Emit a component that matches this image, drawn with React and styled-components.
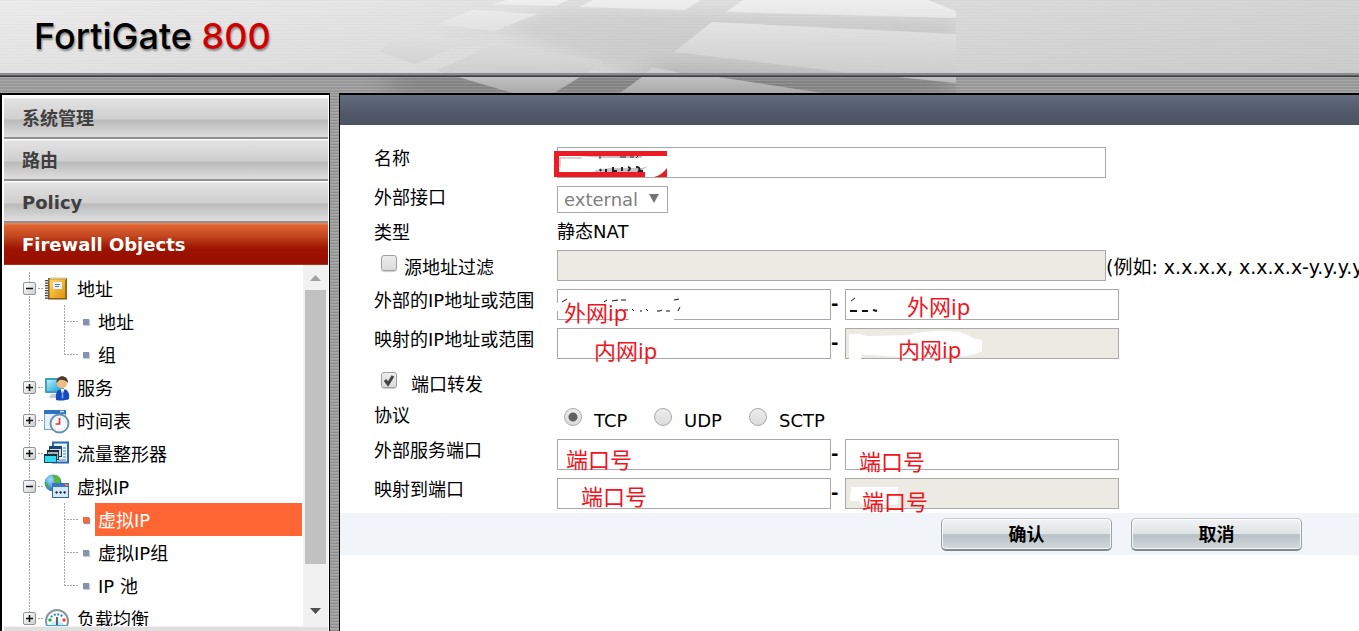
import React from "react";
import styled, { createGlobalStyle, css } from "styled-components";

const Global = createGlobalStyle`
  * { box-sizing: border-box; }
  html, body { margin: 0; height: 100%; }
  body {
    font-family: "DejaVu Sans", "Noto Sans CJK SC", sans-serif;
    font-size: 18px;
    line-height: 22px;
    color: #000;
    background: #fff;
  }
  button, input, select { font: inherit; }
`;

const Page = styled.div`
  display: flex;
  flex-direction: column;
  height: 100vh;
  overflow: hidden;
  background: repeating-linear-gradient(180deg, #8e8e8e 0 1px, #a8a8a8 1px 2px, #a0a0a0 2px 3px);
`;

/* ---------- banner ---------- */

const Banner = styled.header`
  position: relative;
  flex: none;
  overflow: hidden;
`;

const BannerTop = styled.div`
  height: 73px;
  padding: 0 0 2px 34px;
  display: flex;
  align-items: center;
  background:
    repeating-linear-gradient(180deg, rgba(0, 0, 0, 0.02) 0 1px, transparent 1px 3px),
    linear-gradient(172deg, #ececec 0%, #e2e2e2 30%, #cccccc 100%);
`;

const BannerRule = styled.div`
  height: 4px;
  background: linear-gradient(180deg, #8c8c90 0 50%, #5c5c60 50% 75%, #3e3e3e 75%);
`;

const BannerStrip = styled.div`
  height: 16px;
  background: repeating-linear-gradient(180deg, #a8a8a8 0 1px, #979797 1px 3px);
`;

const FloorArt = styled.svg`
  position: absolute;
  left: 340px;
  top: 0;
`;

const Product = styled.h1`
  position: relative;
  z-index: 1;
  margin: 0;
  font-family: Inter, "Liberation Sans", sans-serif;
  font-size: 36px;
  line-height: 44px;
  font-weight: 500;
  color: #000;
  text-shadow: 1px 2px 2px rgba(0, 0, 0, 0.4);
`;

const Model = styled.span`
  color: #d10000;
`;

/* ---------- frame ---------- */

const Body = styled.div`
  flex: 1;
  min-height: 0;
  display: flex;
  gap: 9px;
`;

const Sidebar = styled.nav`
  flex: none;
  width: 330px;
  display: flex;
  flex-direction: column;
  padding: 2px 1px 0 2px;
  background: #fff;
  border: solid #000;
  border-width: 2px 1px 0 2px;
`;

const MenuHead = styled.button`
  flex: none;
  height: 42px;
  padding: 2px 0 0 18px;
  border: 0;
  text-align: left;
  font-weight: 700;
  color: #3f3f3f;
  background: linear-gradient(
    180deg,
    #fafafa 0 1px, #e2e2e2 2px, #cfcfcf 22px, #bababa 23px, #dedede 40px, #8f8f8f 40px 42px
  );
  ${(p) =>
    p.$active &&
    css`
      color: #fff;
      background: linear-gradient(
        180deg,
        #f08050 0 1px, #df6230 2px, #c64a22 12px, #9c1200 26px, #980f00 41px, #b03020 41px 42px
      );
    `}
`;

const NextHead = styled.div`
  flex: none;
  height: 5px;
  background: linear-gradient(180deg, #f2f2f2 0 1px, #dfdfdf 1px);
`;

const TreeArea = styled.div`
  flex: 1;
  min-height: 0;
  display: flex;
`;

const Tree = styled.ul`
  flex: 1;
  margin: 0;
  padding: 7px 0 0;
  list-style: none;
  overflow: hidden;
`;

const SubTree = styled.ul`
  margin: 0;
  padding: 0;
  list-style: none;
`;

const dotsV = "repeating-linear-gradient(180deg, #a8a8a8 0 2px, #fff 2px 3px)";
const dotsH = "repeating-linear-gradient(90deg, #a8a8a8 0 2px, #fff 2px 3px)";

const Branch = styled.li`
  position: relative;
  &::before {
    content: "";
    position: absolute;
    left: 25px;
    top: 0;
    bottom: 0;
    width: 1px;
    background: ${dotsV};
  }
`;

const BranchRow = styled.div`
  position: relative;
  height: 33px;
  display: flex;
  align-items: center;
  padding-left: 19px;
`;

const Toggle = styled.button`
  width: 13px;
  height: 13px;
  padding: 0;
  border: 1px solid #8d969c;
  border-radius: 2px;
  background: linear-gradient(135deg, #fff, #cfcfcf);
  display: block;
  svg { display: block; }
`;

const Dash = styled.span`
  width: 5px;
  height: 1px;
  margin: 0 1px 0 2px;
  background: ${dotsH};
`;

const Icon = styled.svg`
  display: block;
  flex: none;
  width: 26px;
  height: 26px;
  margin-right: 7px;
`;

const BranchLink = styled.a`
  padding-top: 2px;
  color: #000;
  text-decoration: none;
`;

const Leaf = styled.li`
  position: relative;
  height: 33px;
  padding-left: 60px;
  display: flex;
  align-items: center;
  &::before {
    content: "";
    position: absolute;
    left: 60px;
    top: 0;
    height: ${(p) => (p.$last ? "17px" : "33px")};
    width: 1px;
    background: ${dotsV};
  }
`;

const LeafDash = styled.span`
  width: 14px;
  height: 1px;
  background: ${dotsH};
`;

const Bullet = styled.span`
  width: 6px;
  height: 6px;
  margin: 0 6px 0 5px;
  background: ${(p) => (p.$active ? "#ff6633" : "#8793ae")};
  box-shadow: 1px 1px 1px ${(p) => (p.$active ? "#8793ae" : "#c8cede")};
`;

const LeafLink = styled.a`
  flex: 1;
  margin-right: 1px;
  padding: 2px 3px 0;
  line-height: 31px;
  text-decoration: none;
  color: ${(p) => (p.$active ? "#fff" : "#000")};
  background: ${(p) => (p.$active ? "#ff6633" : "transparent")};
`;

const ScrollTrack = styled.div`
  flex: none;
  width: 25px;
  display: flex;
  flex-direction: column;
  align-items: center;
  padding-bottom: 3px;
  background: #f1f1f1;
`;

const ScrollButton = styled.button`
  flex: none;
  width: 25px;
  height: 25px;
  padding: 0;
  border: 0;
  background: none;
  display: flex;
  align-items: center;
  justify-content: center;
`;

const ScrollThumb = styled.div`
  width: 21px;
  height: 89%;
  background: #c1c1c1;
`;

const ScrollLane = styled.div`
  flex: 1;
  min-height: 0;
`;

const Main = styled.main`
  flex: 1;
  min-width: 0;
  overflow: hidden;
  background: #fff;
  border: solid #000;
  border-width: 2px 0 0 1px;
`;

const TitleBar = styled.div`
  height: 30px;
  background: linear-gradient(180deg, #626c80, #505867 60%, #4c5262);
`;

/* ---------- form ---------- */

const Form = styled.form`
  padding-top: 18px;
`;

const Row = styled.div`
  display: grid;
  grid-template-columns: 183px 1fr;
  padding-left: 34px;
  min-height: ${(p) => p.$h || 39}px;
  white-space: nowrap;
`;

const Label = styled.label`
  padding-top: 5px;
`;

const Cell = styled.div`
  display: flex;
  align-items: flex-start;
  padding-top: 4px;
`;

const CheckCell = styled.div`
  display: flex;
  align-items: flex-start;
  padding: 9px 0 0 7px;
`;

const CheckLabel = styled.label`
  display: flex;
  gap: ${(p) => p.$gap}px;
`;

const CheckText = styled.span`
  padding-top: 2px;
`;

const CheckBox = styled.span`
  position: relative;
  width: 16px;
  height: 16px;
  svg {
    position: absolute;
    left: 0;
    top: 0;
    pointer-events: none;
  }
`;

const Check = styled.input`
  appearance: none;
  display: block;
  width: 16px;
  height: 16px;
  margin: 0;
  border: 1px solid #a0a0a0;
  border-radius: 3px;
  background: linear-gradient(180deg, #ececec, #dcdcdc);
  box-shadow: 0 1px 1px #ccc;
`;

const Radios = styled.div`
  display: flex;
  padding: 8px 0 0 7px;
`;

const RadioLabel = styled.label`
  display: flex;
  gap: 12px;
  width: ${(p) => p.$w}px;
`;

const Radio = styled.input`
  appearance: none;
  width: 18px;
  height: 18px;
  margin: 0;
  border: 1px solid #a8a8a8;
  border-radius: 50%;
  background: linear-gradient(180deg, #ececec, #dcdcdc);
  &:checked {
    background: radial-gradient(circle, #606060 0 4px, transparent 5px),
      linear-gradient(180deg, #ececec, #dcdcdc);
  }
`;

const Field = styled.div`
  position: relative;
`;

const Text = styled.input`
  display: block;
  width: ${(p) => (p.$wide ? 549 : 274)}px;
  height: 31px;
  padding: 0 6px;
  border: 1px solid #a9a9a9;
  border-radius: 0;
  background: ${(p) => (p.disabled ? "#ebebe4" : "#fff")};
`;

const Between = styled.span`
  width: 14px;
  padding-top: 4px;
  font-weight: 700;
`;

const Hint = styled.span`
  padding-top: 6px;
  font-size: 19px;
`;

const SelectWrap = styled.div`
  position: relative;
  svg {
    position: absolute;
    right: 9px;
    top: 8px;
  }
`;

const Select = styled.select`
  appearance: none;
  display: block;
  width: 111px;
  height: 27px;
  padding: 1px 6px 0;
  border: 1px solid #a9a9a9;
  border-radius: 0;
  background: #fff;
  color: #808080;
  opacity: 1;
`;

const Note = styled.span`
  position: absolute;
  left: ${(p) => p.$x}px;
  top: ${(p) => p.$y}px;
  font-family: "Noto Sans", "Noto Sans CJK SC", sans-serif;
  font-size: 22px;
  line-height: 26px;
  color: #f0141e;
  white-space: nowrap;
  pointer-events: none;
`;

const Scribble = styled.svg`
  position: absolute;
  left: -3px;
  top: 0;
  overflow: visible;
  pointer-events: none;
`;

const Actions = styled.div`
  height: 42px;
  display: flex;
  justify-content: flex-end;
  align-items: center;
  gap: 19px;
  padding-right: 57px;
  background: #f1f5fa;
`;

const Action = styled.button`
  width: 171px;
  height: 33px;
  padding: 2px 0 0;
  font-weight: 700;
  color: #000;
  border: 1px solid #9aa3a5;
  border-top-color: #c4c8ca;
  border-bottom: 2px solid #7f898b;
  border-radius: 5px;
  background: linear-gradient(180deg, #f1f3f4 0, #dfe2e4 50%, #b7c0c4 52%, #d3dadc 100%);
  box-shadow: inset 0 0 0 1px rgba(255, 255, 255, 0.8);
`;

/* ---------- icons ---------- */

const BookIcon = () => (
  <Icon viewBox="0 0 26 26" aria-hidden="true">
    <defs>
      <linearGradient id="book" x1="0" y1="0" x2="1" y2="1">
        <stop offset="0" stopColor="#ffdc62" />
        <stop offset="1" stopColor="#e2920c" />
      </linearGradient>
    </defs>
    <path d="M4 2h19v21H4z" fill="#9a6a1c" />
    <path d="M6 1.500h16v2H6z" fill="#d8c48c" />
    <path d="M5 3.500h16v18.500H5z" fill="url(#book)" />
    <path d="M2.500 4v19" stroke="#4a4238" strokeWidth="3" strokeDasharray="1.300 1.200" />
    <path d="M5 3v20" stroke="#6b5430" />
    <rect x="9" y="6" width="9" height="7" fill="#eef4ff" />
    <path d="M11 8.500h5M11 10.500h4" stroke="#4a79c0" />
    <path d="M4 23h19" stroke="#77501a" />
  </Icon>
);

const ServiceIcon = () => (
  <Icon viewBox="0 0 26 26" aria-hidden="true">
    <defs>
      <linearGradient id="screen" x1="0" y1="0" x2="1" y2="1">
        <stop offset="0" stopColor="#b8f0fb" />
        <stop offset="1" stopColor="#159fd0" />
      </linearGradient>
    </defs>
    <rect x="1" y="3" width="19" height="15" rx="1" fill="#3c9fc0" />
    <rect x="3" y="5" width="15" height="11" fill="url(#screen)" />
    <path d="M7 19h7l2 4H5z" fill="#c3ced4" />
    <path d="M12 25c-1-8 2-11 6.500-11S26 17 25 24c-3 1.500-9 2-13 1z" fill="#1748bd" />
    <path d="M16.500 14l2 6 2-6z" fill="#fff" />
    <path d="M18.500 15l1 7-1 2-1-2z" fill="#68b4f4" />
    <circle cx="18" cy="8.500" r="5" fill="#eebc80" />
    <path d="M12.500 8c-.5-9 12-9 11.500 0-2-3-6-3.500-8.500-3-1 1-2 2-3 3z" fill="#493b2b" />
  </Icon>
);

const ClockIcon = () => (
  <Icon viewBox="0 0 26 26" aria-hidden="true">
    <rect x="0.500" y="3.500" width="21" height="18" fill="#e6f1fc" stroke="#7ba4d0" />
    <path d="M0 2h22v4H0z" fill="#2f74be" />
    <path d="M16 3.500h4" stroke="#d3e6fa" strokeWidth="1.500" />
    <circle cx="15.500" cy="15.500" r="9" fill="#f8fcff" stroke="#6f8faf" strokeWidth="2" />
    <circle cx="15.500" cy="15.500" r="6.500" fill="none" stroke="#bacbd9" strokeDasharray="1 2.400" />
    <path d="M15.500 10v6h-4" fill="none" stroke="#d23a34" strokeWidth="1.700" />
  </Icon>
);

const ShaperIcon = () => (
  <Icon viewBox="0 0 26 26" aria-hidden="true">
    <rect x="9" y="1.500" width="15" height="20" fill="#eaf4ff" stroke="#2f69ae" strokeWidth="2" />
    <path d="M19 7h3M19 10h3M19 13h3M19 16h3M14 19h8" stroke="#4f7fb6" />
    <rect x="5.500" y="5.500" width="12" height="10" fill="#d9dde0" stroke="#1c3d58" />
    <path d="M5 5h13v3H5z" fill="#164a7a" />
    <rect x="3.500" y="9.500" width="11" height="9" fill="#a8b4bc" stroke="#1c3d58" />
    <path d="M3 9h12v2H3z" fill="#1b2c3c" />
    <rect x="0.500" y="13.500" width="12" height="8" fill="#35d8ec" stroke="#1c4c60" />
    <path d="M0 13h13v2H0z" fill="#12303e" />
  </Icon>
);

const GlobeIcon = () => (
  <Icon viewBox="0 0 26 26" aria-hidden="true">
    <defs>
      <radialGradient id="globe" cx="0.35" cy="0.3" r="0.8">
        <stop offset="0" stopColor="#9bdcff" />
        <stop offset="1" stopColor="#0c5fb8" />
      </radialGradient>
    </defs>
    <circle cx="9" cy="9" r="8.500" fill="url(#globe)" />
    <path d="M9 1c5 0 7 2 8 5l-2 5-3 1c0-3-3-3-2-6 1-2-2-2-1-5z" fill="#58b83c" />
    <path d="M1 8c3 1 4 4 4 7-2-1-4-4-4-7z" fill="#4aa838" />
    <rect x="8.500" y="9.500" width="16" height="14" fill="#d6e9fb" stroke="#3568a8" />
    <path d="M8 9h17v4H8z" fill="#3a76c4" />
    <rect x="21" y="10" width="3" height="2" fill="#ff7448" />
    <path d="M11 18l2-1 1 1.500-1.500 1.500zM15 18l2-1 1 1.500-1.500 1.500zM19 18l2-1 1 1.500-1.500 1.500z" fill="#1f2d4c" />
  </Icon>
);

const GaugeIcon = () => (
  <Icon viewBox="0 0 26 26" aria-hidden="true">
    <circle cx="13" cy="15" r="11" fill="#f6fafc" stroke="#8b969c" strokeWidth="2" />
    <path d="M6 19a8 8 0 0 1 14 0z" fill="#cfe9fb" />
    <path d="M7 11a8 8 0 0 1 12 0" fill="none" stroke="#2c89d8" strokeWidth="2" strokeDasharray="2 1.500" />
    <circle cx="6" cy="14" r="1.700" fill="#31a83a" />
    <circle cx="20" cy="14" r="1.700" fill="#ee4a28" />
    <path d="M13 11v11" stroke="#333" strokeWidth="1.500" />
    <path d="M3 19h20l-3 5H6z" fill="#38a4e6" />
  </Icon>
);

const ToggleMark = ({ open }) => (
  <svg width="11" height="11" viewBox="0 0 11 11" aria-hidden="true">
    <path d={open ? "M2 5.500h7" : "M2 5.500h7M5.500 2v7"} stroke="#111" strokeWidth="1.500" />
  </svg>
);

const Floor = () => (
  <FloorArt width="620" height="93" viewBox="340 0 620 93" aria-hidden="true">
    <defs>
      <filter id="soft" x="-20%" y="-50%" width="140%" height="200%">
        <feGaussianBlur stdDeviation="14 8" />
      </filter>
      <linearGradient id="tile" x1="0" y1="0" x2="0" y2="93" gradientUnits="userSpaceOnUse">
        <stop offset="0" stopColor="#f1f1f1" />
        <stop offset="0.770" stopColor="#cfcfcf" />
        <stop offset="1" stopColor="#adadad" />
      </linearGradient>
      <clipPath id="upper"><path d="M340 0h616v73H340z" /></clipPath>
      <clipPath id="lower"><path d="M340 77h616v16H340z" /></clipPath>
    </defs>
    <g clipPath="url(#upper)">
      <path d="M400 50L560 8 956 20V58L820 74 640 80 500 30z" fill="#000" opacity="0.060" filter="url(#soft)" />
      <path d="M660 64L956 78v20H620z" fill="#000" opacity="0.100" filter="url(#soft)" />
    </g>
    <g clipPath="url(#lower)">
      <path d="M390 80h560v10H390z" fill="#000" opacity="0.280" filter="url(#soft)" />
    </g>
    <g fill="url(#tile)" opacity="0.900">
      <path d="M493 4L556 6 568 0H507z" />
      <path d="M579 7L685 10 701 0H593z" />
      <path d="M726 12L956 18V11L928 0H743z" />
      <path d="M438 24L494 31 537 14 473 10z" />
      <path d="M380 52L415 64 471 41 415 32Q384 42 380 52z" />
      <path d="M437 70L495 44 605 61 587 73H443z" />
      <path d="M458 77L513 93H554L580 77z" />
      <path d="M674 52L712 22 956 34V73H852z" />
      <path d="M897 77L956 83V77z" />
      <path d="M645 73L652 67 681 73z" />
      <path d="M642 77L620 93H822L718 77z" />
    </g>
  </FloorArt>
);

/* ---------- pieces ---------- */

const tree = [
  { name: "地址", icon: BookIcon, open: true, items: ["地址", "组"] },
  { name: "服务", icon: ServiceIcon },
  { name: "时间表", icon: ClockIcon },
  { name: "流量整形器", icon: ShaperIcon },
  { name: "虚拟IP", icon: GlobeIcon, open: true, items: ["虚拟IP", "虚拟IP组", "IP 池"], current: 0 },
  { name: "负载均衡", icon: GaugeIcon },
];

const TreeBranch = ({ node }) => {
  const NodeIcon = node.icon;
  return (
    <Branch>
      <BranchRow>
        <Toggle type="button" aria-label={node.name} aria-expanded={!!node.open}>
          <ToggleMark open={node.open} />
        </Toggle>
        <Dash />
        <NodeIcon />
        <BranchLink href="#">{node.name}</BranchLink>
      </BranchRow>
      {node.items && (
        <SubTree>
          {node.items.map((item, i) => (
            <Leaf key={item} $last={i === node.items.length - 1}>
              <LeafDash />
              <Bullet $active={node.current === i} />
              <LeafLink href="#" $active={node.current === i}>{item}</LeafLink>
            </Leaf>
          ))}
        </SubTree>
      )}
    </Branch>
  );
};

const RangeRow = ({ id, label, from, to, fromArt, toArt, toDisabled }) => (
  <Row>
    <Label htmlFor={id}>{label}</Label>
    <Cell>
      <Field>
        <Text id={id} type="text" />
        {fromArt}
        <Note $x={from.x} $y={from.y}>{from.text}</Note>
      </Field>
      <Between>-</Between>
      <Field>
        <Text type="text" aria-label={label} disabled={toDisabled} />
        {toArt}
        <Note $x={to.x} $y={to.y}>{to.text}</Note>
      </Field>
    </Cell>
  </Row>
);

export default function App() {
  return (
    <>
      <Global />
      <Page>
        <Banner>
          <BannerTop>
            <Product>FortiGate <Model>800</Model></Product>
          </BannerTop>
          <BannerRule />
          <BannerStrip />
          <Floor />
        </Banner>
        <Body>
          <Sidebar>
            <MenuHead type="button">系统管理</MenuHead>
            <MenuHead type="button">路由</MenuHead>
            <MenuHead type="button">Policy</MenuHead>
            <MenuHead type="button" $active>Firewall Objects</MenuHead>
            <TreeArea>
              <Tree>
                {tree.map((node) => <TreeBranch key={node.name} node={node} />)}
              </Tree>
              <ScrollTrack>
                <ScrollButton type="button" aria-label="向上">
                  <svg width="11" height="6"><path d="M0 6L5.500 0 11 6z" fill="#a3a3a3" /></svg>
                </ScrollButton>
                <ScrollLane><ScrollThumb /></ScrollLane>
                <ScrollButton type="button" aria-label="向下">
                  <svg width="11" height="6"><path d="M0 0L5.500 6 11 0z" fill="#505050" /></svg>
                </ScrollButton>
              </ScrollTrack>
            </TreeArea>
            <NextHead />
          </Sidebar>
          <Main>
            <TitleBar />
            <Form onSubmit={(e) => e.preventDefault()}>
              <Row>
                <Label htmlFor="name">名称</Label>
                <Cell>
                  <Field>
                    <Text id="name" type="text" $wide />
                    <Scribble width="113" height="31" aria-hidden="true">
                      <path d="M5 6h108v24H5z" fill="#fff" />
                      <path d="M26 9h62v2H48zM42 23l14-2h32l6-2-8 6H40z" fill="#c4c4c8" />
                      <path d="M46 9v3M66 10h6M76 10h4M84 9l-2 2" stroke="#222" strokeWidth="1" />
                      <path d="M46 22l1 2M52 22v3M59 20v4h4M68 20v4M74 20q4 1 0 4M82 20q5 0 3 4h4" fill="none" stroke="#222" strokeWidth="2" />
                      <path d="M6 20v-9h22" fill="none" stroke="#aaa" />
                      <path d="M0 4h113v5H5v16h86v5H0z" fill="#ed1c24" />
                      <path d="M100 30q8-2 13-9v9z" fill="#ed1c24" />
                    </Scribble>
                  </Field>
                </Cell>
              </Row>
              <Row $h={35}>
                <Label htmlFor="iface">外部接口</Label>
                <Cell>
                  <SelectWrap>
                    <Select id="iface" disabled defaultValue="external">
                      <option value="external">external</option>
                    </Select>
                    <svg width="10" height="9" aria-hidden="true"><path d="M0 0h10L5 9z" fill="#757575" /></svg>
                  </SelectWrap>
                </Cell>
              </Row>
              <Row $h={29}>
                <Label as="span">类型</Label>
                <Cell>静态NAT</Cell>
              </Row>
              <Row>
                <CheckCell>
                  <CheckLabel $gap={7}>
                    <CheckBox><Check type="checkbox" /></CheckBox>
                    <CheckText>源地址过滤</CheckText>
                  </CheckLabel>
                </CheckCell>
                <Cell>
                  <Field><Text type="text" aria-label="源地址过滤" $wide disabled /></Field>
                  <Hint>(例如: x.x.x.x, x.x.x.x-y.y.y.y)</Hint>
                </Cell>
              </Row>
              <RangeRow
                id="extip"
                label="外部的IP地址或范围"
                from={{ text: "外网ip", x: 7, y: 10 }}
                to={{ text: "外网ip", x: 62, y: 4 }}
                fromArt={
                  <Scribble width="140" height="31" aria-hidden="true">
                    <path d="M3 14h2v8H3zM75 29h19v3H75zM94 28h26v4H94z" fill="#fff" />
                    <path d="M8 13l5-3M50 13l3-2M58 12l6-1M67 11h5M120 11l5-1" stroke="#111" strokeWidth="1" />
                    <path d="M70 21h4M78 20l2 2M86 22h2M92 20l2 2M103 22h3l2-1M112 22h4M124 22l2-4" fill="none" stroke="#111" strokeWidth="1" />
                  </Scribble>
                }
                toArt={
                  <Scribble width="60" height="31" aria-hidden="true">
                    <path d="M9 12l4-3" stroke="#111" />
                    <path d="M8 22h7M20 22h6M31 21l4 1" stroke="#111" strokeWidth="2" />
                  </Scribble>
                }
              />
              <RangeRow
                id="mapip"
                label="映射的IP地址或范围"
                from={{ text: "内网ip", x: 37, y: 9 }}
                to={{ text: "内网ip", x: 53, y: 8 }}
                toDisabled
                toArt={
                  <Scribble width="145" height="31" aria-hidden="true">
                    <path d="M7 6h12q3 2 10 2l37-1q24-6 52-3 10 4 15 7 5-1 7 2v10q-6 4-18 5l-55 2-35-3H20l-1 4H7z" fill="#fff" />
                  </Scribble>
                }
              />
              <Row $h={37}>
                <CheckCell>
                  <CheckLabel $gap={14}>
                    <CheckBox>
                      <Check type="checkbox" defaultChecked />
                      <svg width="16" height="16" aria-hidden="true">
                        <path d="M4 8l3 4 5-8" fill="none" stroke="#444" strokeWidth="3" />
                      </svg>
                    </CheckBox>
                    <CheckText>端口转发</CheckText>
                  </CheckLabel>
                </CheckCell>
              </Row>
              <Row $h={35}>
                <Label as="span">协议</Label>
                <Radios role="radiogroup" aria-label="协议">
                  <RadioLabel $w={90}><Radio type="radio" name="proto" defaultChecked /><CheckText>TCP</CheckText></RadioLabel>
                  <RadioLabel $w={95}><Radio type="radio" name="proto" /><CheckText>UDP</CheckText></RadioLabel>
                  <RadioLabel $w={90}><Radio type="radio" name="proto" /><CheckText>SCTP</CheckText></RadioLabel>
                </Radios>
              </Row>
              <RangeRow
                id="extport"
                label="外部服务端口"
                from={{ text: "端口号", x: 9, y: 7 }}
                to={{ text: "端口号", x: 14, y: 9 }}
              />
              <RangeRow
                id="mapport"
                label="映射到端口"
                from={{ text: "端口号", x: 24, y: 5 }}
                to={{ text: "端口号", x: 17, y: 10 }}
                toDisabled
                toArt={
                  <Scribble width="60" height="31" aria-hidden="true">
                    <path d="M9 9h47v17l-3 1H20l-3-4H8z" fill="#fff" />
                  </Scribble>
                }
              />
              <Actions>
                <Action type="submit">确认</Action>
                <Action type="button">取消</Action>
              </Actions>
            </Form>
          </Main>
        </Body>
      </Page>
    </>
  );
}
